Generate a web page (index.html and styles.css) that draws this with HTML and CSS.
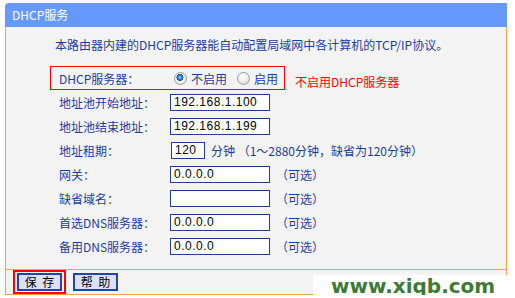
FILE: index.html
```html
<!DOCTYPE html>
<html lang="zh-CN">
  <head>
    <meta charset="UTF-8" />
    <title>DHCP服务</title>
    <link rel="stylesheet" href="styles.css">
  </head>
  <body>
    <div class="panel">
      <div class="title">DHCP服务</div>
      <div class="content">
        <p class="intro">本路由器内建的DHCP服务器能自动配置局域网中各计算机的TCP/IP协议。</p>
        <div class="switch-line">
          <div class="row switch">
            <span class="label">DHCP服务器：</span>
            <span class="radio on"></span><span class="opt">不启用</span>
            <span class="radio second"></span><span class="opt">启用</span>
          </div>
          <span class="note">不启用DHCP服务器</span>
        </div>
        <div class="row"><span class="label">地址池开始地址：</span><input class="field" type="text" value="192.168.1.100"></div>
        <div class="row"><span class="label">地址池结束地址：</span><input class="field" type="text" value="192.168.1.199"></div>
        <div class="row"><span class="label">地址租期：</span><input class="field short" type="text" value="120"><span class="after">分钟 （1～2880分钟，缺省为120分钟）</span></div>
        <div class="row"><span class="label">网关：</span><input class="field" type="text" value="0.0.0.0"><span class="after">（可选）</span></div>
        <div class="row"><span class="label">缺省域名：</span><input class="field" type="text" value=""><span class="after">（可选）</span></div>
        <div class="row"><span class="label">首选DNS服务器：</span><input class="field" type="text" value="0.0.0.0"><span class="after">（可选）</span></div>
        <div class="row"><span class="label">备用DNS服务器：</span><input class="field" type="text" value="0.0.0.0"><span class="after">（可选）</span></div>
      </div>
      <div class="footer">
        <span class="mark"><button class="btn">保 存</button></span>
        <button class="btn help">帮 助</button>
      </div>
      <div class="watermark">www.xiqb.com</div>
    </div>
  </body>
</html>
```

FILE: styles.css
```css
* {
  margin: 0;
  padding: 0;
  box-sizing: border-box;
}
body {
  background-color: #ffffff;
  font-family: "Noto Sans CJK SC", "DejaVu Sans", sans-serif;
  font-size: 12px;
  color: #1c3d9e;
}
.panel {
  position: relative;
  width: 502px;
  margin: 3px 0 0 5px;
}
.title {
  height: 24px;
  line-height: 24px;
  padding-left: 7px;
  background-color: #6699ff;
  color: #ffffff;
  border-radius: 4px 0 0 0;
}
.content {
  background-color: #f3f3f3;
  border-left: 1px solid #f7a046;
  border-right: 1px solid #f7a046;
  padding: 10px 0 11px 0;
}
.intro {
  line-height: 16px;
  padding-left: 49px;
  margin-bottom: 13px;
}
.switch-line {
  display: flex;
  align-items: center;
  padding-left: 44px;
}
.row {
  display: flex;
  align-items: center;
  height: 24px;
  padding-left: 53px;
}
.row.switch {
  width: 235px;
  padding-left: 8px;
  border: 1px solid #ff0000;
}
.label {
  width: 111px;
  flex-shrink: 0;
}
.radio {
  width: 13px;
  height: 13px;
  margin: 0 4px 0 4px;
  border-radius: 50%;
  border: 1px solid #9c9c9c;
  background: radial-gradient(circle at 40% 35%, #ffffff 0%, #ececec 55%, #c8c8c8 100%);
}
.radio.on {
  background: radial-gradient(circle at 45% 40%, #8fd0ff 0%, #2a86d8 22%, #0d4f9e 36%, #f4f4f4 42%, #dcdcdc 100%);
}
.radio.second {
  margin-left: 10px;
}
.note {
  margin-left: 10px;
  color: #ff0000;
  padding-top: 7px;
}
.field {
  width: 100px;
  height: 17px;
  border: 1px solid #1c3d9e;
  background-color: #ffffff;
  padding-left: 3px;
  font-family: "Liberation Sans", sans-serif;
  font-size: 12px;
  letter-spacing: 0.5px;
  color: #000000;
  outline: none;
}
.field.short {
  width: 34px;
  margin-left: 1px;
}
.after {
  margin-left: 6px;
}
.footer {
  display: flex;
  align-items: center;
  height: 26px;
  padding-left: 7px;
  border: 1px solid #f7a046;
  background-color: #f3f3f3;
}
.mark {
  display: flex;
  padding: 1px 2px;
  border: 2px solid #ff0000;
}
.btn {
  width: 45px;
  height: 18px;
  border: 2px solid #2045a5;
  background-color: #dde0fb;
  font-family: "Noto Sans CJK SC", sans-serif;
  font-size: 12px;
  line-height: 14px;
  word-spacing: 3px;
  color: #000000;
}
.btn.help {
  margin-left: 7px;
}
.watermark {
  position: absolute;
  left: 308px;
  top: 272px;
  width: 200px;
  height: 23px;
  background-color: #ffffff;
  padding-left: 18px;
  font-family: "DejaVu Sans", sans-serif;
  font-weight: bold;
  font-size: 20px;
  line-height: 23px;
  color: #3f7a34;
}
```
